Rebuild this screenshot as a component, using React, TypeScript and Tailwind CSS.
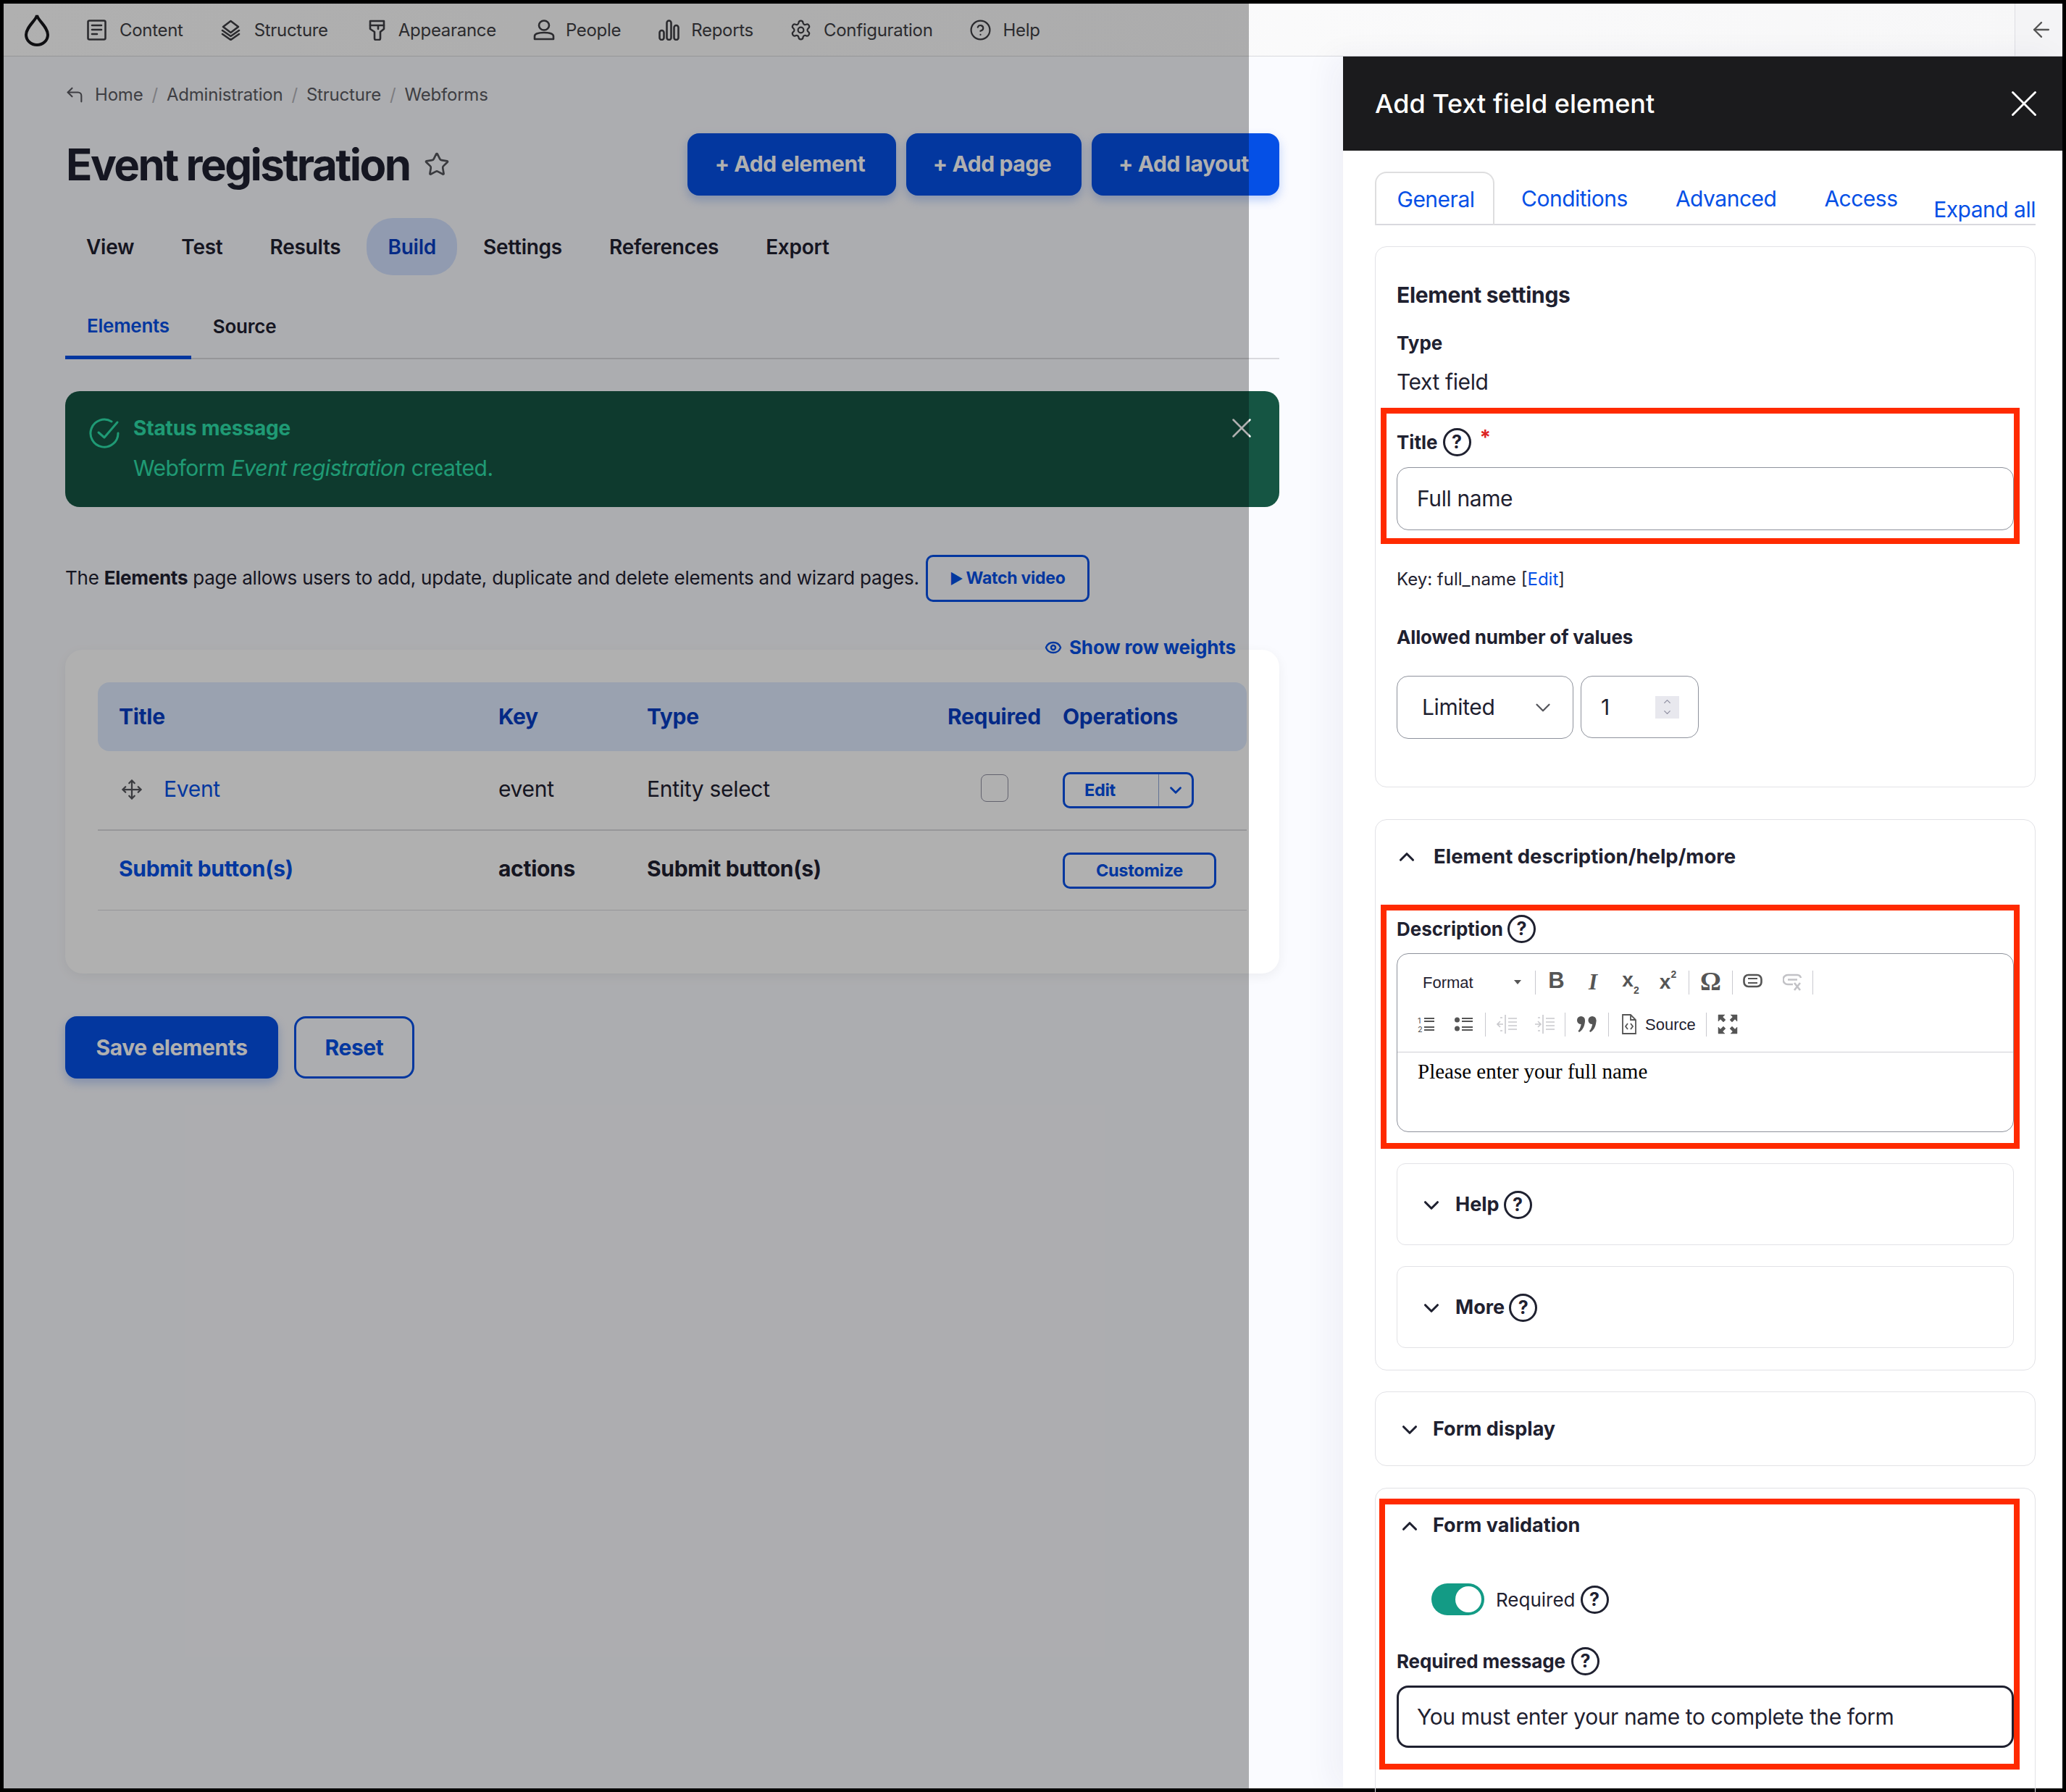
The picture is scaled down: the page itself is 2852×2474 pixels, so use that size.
import { ArrowLeft, ChevronDown, ChevronUp, CircleHelp, CornerUpLeft, Eye, Move, Settings, Star, X } from 'lucide-react';

const navItems = [
  { label: 'Content', icon: 'content', gap: 'ml-[18px]', offset: '' },
  { label: 'Structure', icon: 'structure', gap: 'ml-[18px]', offset: 'ml-[51px]' },
  { label: 'Appearance', icon: 'appearance', gap: 'ml-[18px]', offset: 'ml-[56px]' },
  { label: 'People', icon: 'people', gap: 'ml-[15px]', offset: 'ml-[51px]' },
  { label: 'Reports', icon: 'reports', gap: 'ml-[16px]', offset: 'ml-[52px]' },
  { label: 'Configuration', icon: 'config', gap: 'ml-[16px]', offset: 'ml-[50px]' },
  { label: 'Help', icon: 'help', gap: 'ml-[16px]', offset: 'ml-[50px]' },
];

function NavIcon({ name }: { name: string }) {
  const common = { fill: 'none', stroke: '#3f3f44', strokeWidth: 2.6, strokeLinecap: 'round' as const, strokeLinejoin: 'round' as const };
  if (name === 'content') {
    return (
      <svg width="27" height="29" viewBox="0 0 27 29" {...common}>
        <rect x="1.5" y="1.5" width="24" height="26" rx="2" />
        <path d="M7 8h13M7 14h13M7 20h7" />
      </svg>
    );
  }
  if (name === 'structure') {
    return (
      <svg width="29" height="29" viewBox="0 0 29 29" {...common}>
        <path d="M14.5 2 25 10 14.5 18 4 10Z" />
        <path d="M3 15l11.5 8L26 15M3 20l11.5 8L26 20" />
      </svg>
    );
  }
  if (name === 'appearance') {
    return (
      <svg width="23" height="29" viewBox="0 0 23 29" {...common}>
        <path d="M2 2h19v11l-5 4v9a2 2 0 0 1-2 2h-4a2 2 0 0 1-2-2v-9l-6-4Z" />
        <path d="M2 8h19M13 8v5" />
      </svg>
    );
  }
  if (name === 'people') {
    return (
      <svg width="30" height="29" viewBox="0 0 30 29" {...common}>
        <ellipse cx="15" cy="8" rx="7" ry="6.5" />
        <path d="M2 27v-4c0-3 5-5 13-5s13 2 13 5v4Z" />
      </svg>
    );
  }
  if (name === 'reports') {
    return (
      <svg width="29" height="29" viewBox="0 0 29 29" {...common}>
        <rect x="1.5" y="15" width="6" height="13" rx="3" />
        <rect x="11.5" y="1.5" width="6" height="26.5" rx="3" />
        <rect x="21.5" y="8" width="6" height="20" rx="3" />
      </svg>
    );
  }
  if (name === 'config') return <Settings size={31} color="#3f3f44" strokeWidth={1.7} />;
  return <CircleHelp size={31} color="#3f3f44" strokeWidth={1.7} />;
}

function HelpDot({ size = 'w-[39px] h-[39px]' }: { size?: string }) {
  return (
    <span className={`${size} inline-flex items-center justify-center rounded-full border-[3px] border-[#1f2130] text-[25px] font-bold leading-none text-[#1f2130]`}>
      ?
    </span>
  );
}

function Sep() {
  return <span className="h-[33px] w-px bg-[#c9c9cf]" />;
}

function Tool({ w, children }: { w: string; children: React.ReactNode }) {
  return <span className={`${w} flex items-center justify-center`}>{children}</span>;
}

function Toolbar() {
  return (
    <div className="h-[136px] border-b border-[#cfcfd4] py-[10px]">
      <div className="flex h-[58px] items-center">
        <span className="flex w-[190px] items-center justify-between pl-[35px] pr-[19px] font-['Liberation_Sans',sans-serif] text-[22px] text-[#1f2130]">
          Format
          <span className="h-0 w-0 border-x-[5px] border-t-[6px] border-x-transparent border-t-[#555]" />
        </span>
        <Sep />
        <Tool w="w-[54px]"><span className="mb-[3px] ml-[3px] font-['Liberation_Sans',sans-serif] text-[31px] font-bold text-[#555]">B</span></Tool>
        <Tool w="w-[50px]"><span className="font-['Liberation_Serif',serif] text-[31px] font-bold italic text-[#555]">I</span></Tool>
        <Tool w="w-[54px]">
          <span className="mb-[6px] font-['Liberation_Sans',sans-serif] text-[28px] font-bold leading-none text-[#555]">x<sub className="align-[-6px] text-[14px]">2</sub></span>
        </Tool>
        <Tool w="w-[53px]">
          <span className="mr-[4px] font-['Liberation_Sans',sans-serif] text-[28px] font-bold leading-none text-[#555]">x<sup className="align-[8px] text-[14px]">2</sup></span>
        </Tool>
        <Sep />
        <Tool w="w-[59px]"><span className="mb-[2px] font-['Liberation_Serif',serif] text-[36px] font-bold leading-none text-[#555]">Ω</span></Tool>
        <Sep />
        <Tool w="w-[55px]">
          <svg width="27" height="20" viewBox="0 0 27 20" fill="none" stroke="#555" strokeWidth="2.6" className="mb-[5px]">
            <rect x="1.5" y="2" width="24" height="16" rx="6" />
            <path d="M7 7h13M7 13h13" strokeWidth="2" />
          </svg>
        </Tool>
        <Tool w="w-[55px]">
          <svg width="27" height="26" viewBox="0 0 27 26" fill="none" stroke="#c2c2c6" strokeWidth="2.6" className="mb-[1px]">
            <path d="M14 16H7a5.500 5.500 0 0 1 0-13h13a5.500 5.500 0 0 1 5 4M7 9.500h13" />
            <path d="M16 14l8 10M24 14l-8 10" />
          </svg>
        </Tool>
        <Sep />
      </div>
      <div className="flex h-[58px] items-center pl-[14px]">
        <Tool w="w-[51px]">
          <svg width="24" height="24" viewBox="0 0 24 24" fill="#555" stroke="#555">
            <text x="0" y="11" fontSize="11" stroke="none">1</text>
            <text x="0" y="23" fontSize="11" stroke="none">2</text>
            <path d="M9 4h14M9 8h14M9 16h14M9 20h14" strokeWidth="2" fill="none" />
          </svg>
        </Tool>
        <Tool w="w-[56px]">
          <svg width="26" height="24" viewBox="0 0 26 24" fill="none" stroke="#555" strokeWidth="2" className="mr-[4px]">
            <circle cx="4.500" cy="6" r="3.500" fill="#555" stroke="none" />
            <circle cx="4.500" cy="18" r="3.500" fill="#555" stroke="none" />
            <path d="M11 4h15M11 8h15M11 16h15M11 20h15" />
          </svg>
        </Tool>
        <Sep />
        <Tool w="w-[58px]">
          <svg width="28" height="28" viewBox="0 0 28 28" fill="none" stroke="#c9c9cd" strokeWidth="1.600">
            <path d="M12 1v26M16 6h12M16 11h12M16 16h12M16 21h12M2 14h7M5 10l-4 4 4 4M5 5h3M5 23h3" />
          </svg>
        </Tool>
        <Tool w="w-[51px]">
          <svg width="28" height="28" viewBox="0 0 28 28" fill="none" stroke="#c9c9cd" strokeWidth="1.600" className="mr-[6px]">
            <path d="M12 1v26M16 6h12M16 11h12M16 16h12M16 21h12M1 14h8M5 10l4 4-4 4M5 5h3M5 23h3" />
          </svg>
        </Tool>
        <Sep />
        <Tool w="w-[59px]">
          <svg width="29" height="24" viewBox="0 0 29 24" fill="#555">
            <circle cx="6.500" cy="6.500" r="5.500" />
            <path d="M12 6.500C12 14 9 20 4 23l-1.500-1.500C5 19 6.500 15 7 9Z" />
            <circle cx="22" cy="6.500" r="5.500" />
            <path d="M27.500 6.500C27.500 14 24.500 20 19.500 23L18 21.500C20.500 19 22 15 22.500 9Z" />
          </svg>
        </Tool>
        <Sep />
        <span className="flex w-[134px] items-center gap-[12px] pl-[18px]">
          <svg width="20" height="28" viewBox="0 0 20 28" fill="none" stroke="#555" strokeWidth="1.800">
            <path d="M1 1h11l7 7v19H1Z" />
            <path d="M12 1v7h7M8 13l-3 4 3 4M12 13l3 4-3 4" />
          </svg>
          <span className="font-['Liberation_Sans',sans-serif] text-[22px] text-[#1f2130]">Source</span>
        </span>
        <Sep />
        <Tool w="w-[58px]">
          <svg width="28" height="28" viewBox="0 0 28 28" fill="#555" stroke="#555">
            <path d="M1 1h9l-3 3 4 4-3 3-4-4-3 3ZM27 1v9l-3-3-4 4-3-3 4-4-3-3ZM1 27v-9l3 3 4-4 3 3-4 4 3 3ZM27 27h-9l3-3-4-4 3-3 4 4 3-3Z" strokeWidth="0.500" />
          </svg>
        </Tool>
      </div>
    </div>
  );
}

function App() {
  return (
    <div className="h-[2474px] w-[2852px] overflow-hidden bg-black p-[5px] font-['Inter',sans-serif] text-[#1f2130]">
      <div className="relative flex h-full flex-col bg-[#fafbff]">
        {/* Top toolbar */}
        <header className="flex h-[73px] shrink-0 items-center border-b border-[#d9d9dd] bg-gradient-to-r from-white to-[#f7f7f8] pl-[28px]">
          <svg width="36" height="47" viewBox="0 0 36 47" fill="none" stroke="#17171b" strokeWidth="4">
            <path d="M18 3c1 7 15 16 15 27 0 8-7 14-15 14S3 38 3 30C3 19 17 10 18 3Z" />
          </svg>
          <nav className="ml-[51px] flex items-center pt-[1px] text-[24px] tracking-[-0.3px] text-[#3f3f44]">
            {navItems.map((item) => (
              <span key={item.label} className={`flex items-center ${item.offset}`}>
                <NavIcon name={item.icon} />
                <span className={item.gap}>{item.label}</span>
              </span>
            ))}
          </nav>
          <button className="ml-auto flex h-full w-[66px] items-center justify-center border-l border-[#dedee2] bg-[#f4f4f6] pl-[6px]">
            <ArrowLeft size={34} color="#555" strokeWidth={1.6} />
          </button>
        </header>

        <div className="flex min-h-0 flex-1">
          {/* Main page */}
          <main className="w-[1849px] shrink-0 pl-[85px] pr-[88px]">
            <div className="mt-[26px] flex h-[52px] items-center pt-[2px] text-[24px] tracking-[-0.2px] text-[#5a5b62]">
              <CornerUpLeft size={28} color="#5a5b62" strokeWidth={1.8} className="ml-[-1px] mr-[14px]" />
              Home<span className="mx-[12px] text-[#b4b4ba]">/</span>Administration<span className="mx-[12px] text-[#b4b4ba]">/</span>Structure<span className="mx-[12px] text-[#b4b4ba]">/</span>Webforms
            </div>

            <div className="mt-[28px] flex h-[86px] items-center">
              <h1 className="ml-[1px] text-[60px] font-bold tracking-[-0.042em] text-[#1f2130]">Event registration</h1>
              <Star size={36} color="#55565c" strokeWidth={1.8} className="ml-[19px]" />
              <div className="ml-auto flex gap-[14px] text-[30px] font-bold tracking-[-0.4px] text-white">
                <button className="h-[86px] w-[288px] rounded-[16px] bg-[#0550e6] pb-[2px] pr-[5px] shadow-[0_6px_14px_rgba(5,80,230,0.25)]">+ Add element</button>
                <button className="h-[86px] w-[242px] rounded-[16px] bg-[#0550e6] pb-[2px] pr-[5px] shadow-[0_6px_14px_rgba(5,80,230,0.25)]">+ Add page</button>
                <button className="h-[86px] w-[259px] rounded-[16px] bg-[#0550e6] pb-[2px] pr-[5px] shadow-[0_6px_14px_rgba(5,80,230,0.25)]">+ Add layout</button>
              </div>
            </div>

            <ul className="mt-[31px] flex h-[79px] gap-[7px] text-[28px] font-semibold tracking-[-0.25px]">
              {['View', 'Test', 'Results', 'Build', 'Settings', 'References', 'Export'].map((tab) => (
                <li
                  key={tab}
                  className={`flex items-center rounded-[36px] px-[29px] ${tab === 'Build' ? 'bg-[#d3e1ff] text-[#073dc4]' : ''}`}
                >
                  {tab}
                </li>
              ))}
            </ul>

            <div className="mt-[25px] flex h-[91px] border-b-2 border-[#d9d9de] text-[26px] font-semibold tracking-[-0.25px]">
              <span className="mb-[-2px] flex items-center border-b-[5px] border-[#0550e6] px-[30px] pt-[2px] text-[#0550e6]">Elements</span>
              <span className="flex items-center px-[30px] pt-[2px]">Source</span>
            </div>

            {/* Status message */}
            <div className="mt-[44px] flex h-[160px] rounded-[20px] bg-[#155543] pl-[32px] pr-[29px] pt-[32px] text-[#2ee0aa]">
              <svg width="44" height="44" viewBox="0 0 44 44" fill="none" stroke="#2ee0aa" strokeWidth="3" strokeLinecap="round" strokeLinejoin="round" className="mt-[4px]">
                <path d="M41 22a19 19 0 1 1-9-16" />
                <path d="M14 21l8 7L40 7" />
              </svg>
              <div className="ml-[18px] flex-1">
                <p className="text-[28px] font-bold leading-[38px] tracking-[-0.15px]">Status message</p>
                <p className="mt-[17px] text-[30px] leading-[38px] tracking-[-0.46px]">
                  Webform <em>Event registration</em> created.
                </p>
              </div>
              <X size={46} color="#fff" strokeWidth={1.3} className="mt-[-4px]" />
            </div>

            <div className="mt-[66px] flex h-[65px] items-center text-[26px] tracking-[-0.25px]">
              <p className="pb-[2px]">
                The <strong className="font-bold">Elements</strong> page allows users to add, update, duplicate and delete elements and wizard pages.
              </p>
              <button className="ml-[9px] flex h-[65px] w-[226px] items-center justify-center gap-[4px] rounded-[10px] border-[3px] border-[#0550e6] text-[23px] font-bold text-[#0550e6]">
                <span className="text-[20px]">▶</span>Watch video
              </button>
            </div>

            {/* Elements table */}
            <section className="relative mt-[66px] h-[447px] rounded-[24px] bg-white p-[45px] shadow-[0_4px_16px_rgba(0,0,0,0.06)]">
              <a className="absolute right-[60px] top-[-23px] flex items-center gap-[10px] text-[26px] font-bold tracking-[-0.1px] text-[#0550e6]">
                <Eye size={24} strokeWidth={2.4} />
                Show row weights
              </a>
              <div className="grid h-[95px] grid-cols-[524px_205px_415px_159px_283px] items-center rounded-[16px] bg-[#dfebff] text-[30px] font-bold tracking-[-0.3px] text-[#073dc4]">
                <span className="pl-[29px]">Title</span>
                <span className="pl-[29px]">Key</span>
                <span className="pl-[29px]">Type</span>
                <span className="pl-[29px]">Required</span>
                <span className="pl-[29px]">Operations</span>
              </div>
              <div className="grid h-[110px] grid-cols-[524px_205px_415px_159px_283px] items-center border-b-2 border-[#d9d9de] pb-[3px] text-[30px] tracking-[-0.3px]">
                <span className="flex items-center pl-[32px] text-[#0550e6]">
                  <Move size={30} color="#55565c" strokeWidth={1.8} />
                  <span className="ml-[29px]">Event</span>
                </span>
                <span className="pl-[29px]">event</span>
                <span className="pl-[29px]">Entity select</span>
                <span className="pb-[3px] pl-[75px]">
                  <span className="block h-[38px] w-[38px] rounded-[8px] border border-[#8e8ea0] bg-white" />
                </span>
                <span className="pl-[29px] pt-[2px]">
                  <span className="flex h-[50px] w-[181px] items-center rounded-[10px] border-[3px] border-[#0550e6] text-[23.5px] font-bold text-[#0550e6]">
                    <span className="w-[129px] pl-[27px]">Edit</span>
                    <span className="flex h-full flex-1 items-center justify-center border-l border-[#8ea7d8]">
                      <ChevronDown size={26} strokeWidth={2.6} />
                    </span>
                  </span>
                </span>
              </div>
              <div className="grid h-[110px] grid-cols-[524px_205px_415px_159px_283px] items-center border-b border-[#d9d9de] pb-[5px] text-[30px] font-bold tracking-[-0.3px]">
                <span className="pl-[29px] text-[#0550e6]">Submit button(s)</span>
                <span className="pl-[29px]">actions</span>
                <span className="pl-[29px]">Submit button(s)</span>
                <span />
                <span className="pl-[29px] pt-[5px]">
                  <span className="flex h-[50px] w-[212px] items-center justify-center rounded-[10px] border-[3px] border-[#0550e6] text-[23.5px] text-[#0550e6]">Customize</span>
                </span>
              </div>
            </section>

            <div className="mt-[59px] flex gap-[22px] text-[30px] font-bold tracking-[-0.4px]">
              <button className="h-[86px] w-[294px] rounded-[16px] bg-[#0550e6] text-white shadow-[0_6px_14px_rgba(5,80,230,0.25)]">Save elements</button>
              <button className="h-[86px] w-[166px] rounded-[16px] border-[3px] border-[#0550e6] text-[#0550e6]">Reset</button>
            </div>
          </main>

          {/* Off-canvas dialog */}
          <aside className="relative flex-1 bg-white shadow-[-16px_0_40px_rgba(30,40,90,0.05)]">
            <div className="flex h-[130px] items-center justify-between bg-[#1b1b1d] pl-[44px] pr-[22px] text-white">
              <h2 className="text-[36px] font-medium">Add Text field element</h2>
              <X size={62} color="#fff" strokeWidth={1.1} />
            </div>
            <div className="pl-[44px] pr-[37px]">
              <div className="mt-[29px] flex h-[74px] items-end border-b-2 border-[#d9d9de] text-[30px] tracking-[-0.5px] text-[#0550e6]">
                <span className="mb-[-2px] flex h-[74px] w-[165px] items-center justify-center rounded-t-[16px] border-2 border-b-0 border-[#dededf] pl-[3px]">General</span>
                <span className="ml-[37px] flex h-[74px] items-center pt-[4px]">Conditions</span>
                <span className="ml-[66px] flex h-[74px] items-center pt-[4px]">Advanced</span>
                <span className="ml-[66px] flex h-[74px] items-center pt-[4px]">Access</span>
                <span className="mb-[-3px] ml-auto">Expand all</span>
              </div>

              {/* Element settings */}
              <section className="mt-[29px] h-[747px] rounded-[16px] border border-[#e2e2e6] px-[29px]">
                <h3 className="mt-[46px] h-[40px] text-[30px] font-bold leading-[40px] tracking-[-0.3px]">Element settings</h3>
                <p className="mt-[27px] h-[40px] text-[26px] font-bold leading-[40px]">Type</p>
                <p className="mt-[13px] h-[40px] text-[30px] leading-[40px] tracking-[-0.4px]">Text field</p>
                <div className="ml-[-22px] mr-[-8px] mt-[16px] border-[8px] border-[#ff2a00] pb-[11px] pl-[14px] pt-[19px]">
                  <div className="flex h-[40px] items-center text-[26px] font-bold">
                    Title<span className="ml-[7px]"><HelpDot /></span>
                    <span className="mb-[12px] ml-[12px] text-[28px] text-[#dc2323]">*</span>
                  </div>
                  <div className="mt-[15px] flex h-[87px] items-center rounded-[16px] border border-[#8e929c] pl-[27px] text-[30px] tracking-[-0.4px]">Full name</div>
                </div>
                <p className="mt-[29px] h-[40px] text-[24px] leading-[40px]">
                  Key: full_name [<span className="text-[#0550e6]">Edit</span>]
                </p>
                <p className="mt-[40px] h-[40px] text-[26px] font-bold leading-[40px] tracking-[-0.15px]">Allowed number of values</p>
                <div className="mt-[33px] flex gap-[10px] text-[30px] tracking-[-0.4px]">
                  <div className="flex h-[87px] w-[244px] items-center justify-between rounded-[16px] border border-[#8e929c] pl-[34px] pr-[24px]">
                    Limited
                    <ChevronDown size={34} color="#55565c" strokeWidth={1.6} />
                  </div>
                  <div className="flex h-[86px] w-[163px] items-center justify-between rounded-[16px] border border-[#8e929c] pl-[27px] pr-[26px]">
                    1
                    <span className="flex h-[31px] w-[33px] flex-col items-center justify-center bg-[#e8e8ee]">
                      <ChevronUp size={15} color="#8e8ea0" strokeWidth={2} />
                      <ChevronDown size={15} color="#8e8ea0" strokeWidth={2} />
                    </span>
                  </div>
                </div>
              </section>

              {/* Description / help / more */}
              <section className="mt-[44px] h-[761px] rounded-[16px] border border-[#e2e2e6] px-[29px]">
                <div className="mt-[31px] flex h-[40px] items-center text-[27.5px] font-bold">
                  <ChevronUp size={34} strokeWidth={2.2} className="ml-[-3px] mr-[20px]" />
                  Element description/help/more
                </div>
                <div className="ml-[-22px] mr-[-8px] mt-[46px] border-[8px] border-[#ff2a00] pb-[15px] pl-[14px] pt-[5px]">
                  <div className="flex h-[40px] items-center text-[26px] font-bold">
                    Description<span className="ml-[6px]"><HelpDot /></span>
                  </div>
                  <div className="mt-[14px] h-[247px] rounded-[16px] border border-[#8e929c]">
                    <Toolbar />
                    <p className="pl-[28px] pt-[8px] font-['Liberation_Serif',serif] text-[29px] leading-[36px] text-black">Please enter your full name</p>
                  </div>
                </div>
                <div className="mt-[20px] flex h-[113px] items-center rounded-[12px] border border-[#e2e2e6] pl-[30px] pt-[2px] text-[27px] font-bold">
                  <ChevronDown size={34} strokeWidth={2.2} className="mr-[16px]" />
                  Help<span className="ml-[6px]"><HelpDot /></span>
                </div>
                <div className="mt-[29px] flex h-[113px] items-center rounded-[12px] border border-[#e2e2e6] pl-[30px] pt-[2px] text-[27px] font-bold">
                  <ChevronDown size={34} strokeWidth={2.2} className="mr-[16px]" />
                  More<span className="ml-[6px]"><HelpDot /></span>
                </div>
              </section>

              {/* Form display */}
              <section className="mt-[29px] flex h-[103px] items-center rounded-[16px] border border-[#e2e2e6] pl-[30px] pt-[2px] text-[27px] font-bold">
                <ChevronDown size={34} strokeWidth={2.2} className="mr-[15px]" />
                Form display
              </section>

              {/* Form validation */}
              <section className="mt-[30px] h-[500px] rounded-[16px] border border-[#e2e2e6] px-[29px] pt-[14px]">
                <div className="ml-[-24px] mr-[-8px] border-[8px] border-[#ff2a00] pb-[22px] pl-[16px] pt-[9px]">
                  <div className="flex h-[40px] items-center pt-[1px] text-[27px] font-bold">
                    <ChevronUp size={34} strokeWidth={2.2} className="ml-[1px] mr-[15px]" />
                    Form validation
                  </div>
                  <div className="ml-[48px] mt-[60px] flex h-[44px] items-center text-[26px]">
                    <span className="flex h-[44px] w-[73px] items-center justify-end rounded-full bg-[#139b85] pr-[4px]">
                      <span className="h-[36px] w-[36px] rounded-full bg-white" />
                    </span>
                    <span className="ml-[16px]">Required</span>
                    <span className="ml-[7px]"><HelpDot /></span>
                  </div>
                  <div className="mt-[43px] flex h-[40px] items-center text-[26px] font-bold tracking-[-0.15px]">
                    Required message<span className="ml-[8px]"><HelpDot /></span>
                  </div>
                  <div className="mt-[14px] flex h-[86px] items-center rounded-[16px] border-[3px] border-[#1f2130] pl-[25px] text-[30px] tracking-[-0.4px]">
                    You must enter your name to complete the form
                  </div>
                </div>
              </section>
            </div>
          </aside>
        </div>

        {/* Overlay dimming the page behind the dialog */}
        <div className="absolute bottom-0 left-0 top-0 w-[1719px] bg-[rgba(0,0,0,0.31)]" />
      </div>
    </div>
  );
}

export default App;
